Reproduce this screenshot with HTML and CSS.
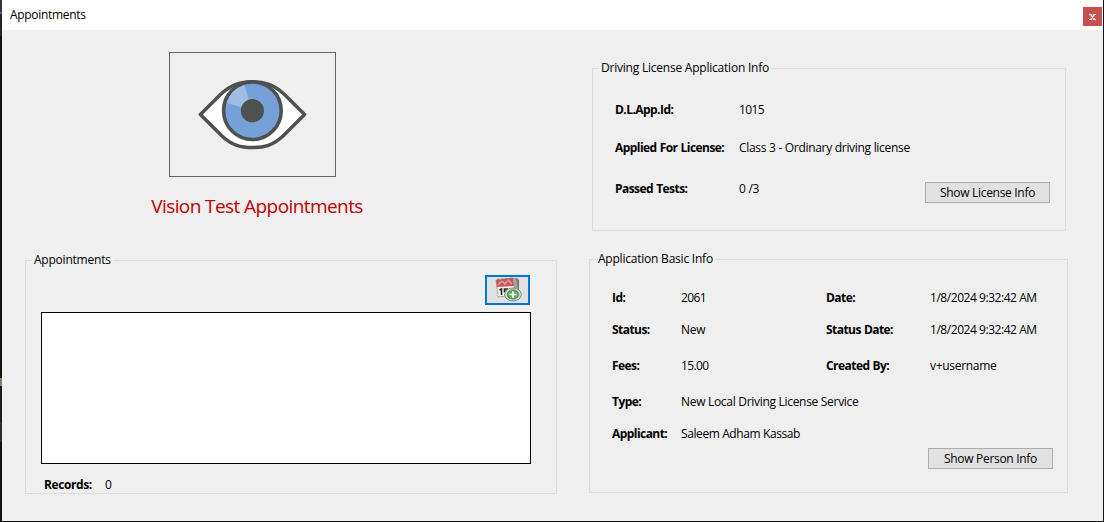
FILE: index.html
```html
<!DOCTYPE html>
<html lang="en">
<head>
<meta charset="utf-8">
<title>Appointments</title>
<link rel="stylesheet" href="styles.css">
</head>
<body>
<div class="window">
  <header class="titlebar">
    <span class="caption">Appointments</span>
    <button class="close" aria-label="Close"><svg width="7" height="6" viewBox="0 0 7 6"><path d="M0 .5h2.8M4.2 .5H7M0 5.5h2.8M4.2 5.5H7M1.6 .7l3.8 4.6M5.4 .7L1.6 5.3" stroke="#fff" stroke-width="1.2" fill="none"/></svg></button>
  </header>
  <main class="content">
    <section class="left">
      <div class="picture">
        <svg width="165" height="123" viewBox="0 0 165 123">
          <path d="M30.4 61.5L51 41C62 31 71 28.7 82.5 28.7S103 31 114 41L134.600 61.500L113 83C103 92.500 94 94.600 82.500 94.600S62 92.500 52 83Z" fill="#fff" stroke="#4d5251" stroke-width="3.500" stroke-linejoin="round"/>
          <circle cx="82.400" cy="57.700" r="28.800" fill="#76a1d8" stroke="#4d5251" stroke-width="3.600"/>
          <path d="M82.400 57.700L74.300 32A27 27 0 0 0 56.700 49.800Z" fill="#9fbde3"/>
          <circle cx="82.400" cy="57.700" r="11.600" fill="#4d5251"/>
        </svg>
      </div>
      <h1 class="heading">Vision Test Appointments</h1>
      <fieldset class="group appointments">
        <legend>Appointments</legend>
        <button class="add" aria-label="Add appointment">
          <svg width="30" height="26" viewBox="0 0 30 26">
            <path d="M10 2l14-1 2 2v13l-12 5z" fill="#777" />
            <path d="M18 2l5-1 2 12-6 1z" fill="#a9a3a2"/>
            <path d="M3 3L20 1l2 17L5 20z" fill="#f5f3f2" stroke="#948a89" stroke-width=".7"/>
            <path d="M3 3L20 1l1 8L4 10z" fill="#cf5557"/>
            <path d="M5 8l4-4 3 3 3-4 4 4" fill="none" stroke="#eaa09c" stroke-width="1.300"/>
            <path d="M5 1.500v3M9 1.200v3M14 1v3M18 .7v3" stroke="#8a7373" stroke-width="1.200"/>
            <path d="M6.500 13l2-1v6M15 12h-3.500v2.500c4-.8 4 3.500 0 3" fill="none" stroke="#292929" stroke-width="1.600"/>
            <ellipse cx="20" cy="17.500" rx="8.300" ry="6.500" fill="#dcdfda" stroke="#858985"/>
            <ellipse cx="20" cy="17.500" rx="5.900" ry="4.700" fill="#5cad5c" stroke="#398343" stroke-width=".7"/>
            <path d="M16.500 17.500h7M20 14.300v6.400" stroke="#fff" stroke-width="1.700"/>
          </svg>
        </button>
        <div class="list"></div>
        <div class="records"><b>Records:</b><span>0</span></div>
      </fieldset>
    </section>
    <section class="right">
      <fieldset class="group license">
        <legend>Driving License Application Info</legend>
        <div class="license-grid">
          <b>D.L.App.Id:</b><span class="num wide">1015</span>
          <b>Applied For License:</b><span class="wide">Class 3 - Ordinary driving license</span>
          <b>Passed Tests:</b><span>0 /3</span>
          <button class="button show-license">Show License Info</button>
        </div>
      </fieldset>
      <fieldset class="group basic">
        <legend>Application Basic Info</legend>
        <div class="basic-grid">
          <b>Id:</b><span class="num">2061</span><b>Date:</b><span class="date">1/8/2024 9:32:42 AM</span>
          <b>Status:</b><span>New</span><b>Status Date:</b><span class="date">1/8/2024 9:32:42 AM</span>
          <b>Fees:</b><span class="num">15.00</span><b>Created By:</b><span>v+username</span>
          <b>Type:</b><span class="wide">New Local Driving License Service</span>
          <b>Applicant:</b><span class="wide name">Saleem Adham Kassab</span>
        </div>
        <button class="button show-person">Show Person Info</button>
      </fieldset>
    </section>
  </main>
</div>
</body>
</html>
```
FILE: styles.css
```css
* { box-sizing: border-box; }
body {
  margin: 0;
  width: 1104px;
  height: 522px;
  overflow: hidden;
  padding: 0 1px 1px 2px;
  background: linear-gradient(#333 0 12px, #5b4bc0 12px 14px, #252528 14px 36px, #111 36px 378px, #8a7a60 378px 386px, #1c1c1c 386px 422px, #2c2c2c 422px 442px, #111 442px) 0 0 / 2px 100% no-repeat #151515;
  font: 12px/17px "Open Sans", "Noto Sans", sans-serif;
  letter-spacing: -0.3px;
  color: #000;
}
b { font-weight: 700; letter-spacing: -0.55px; word-spacing: 0.5px; }
button { font: inherit; letter-spacing: inherit; color: inherit; padding: 0; }
.window { height: 521px; background: #efefef; }
.titlebar {
  display: flex;
  justify-content: space-between;
  height: 30px;
  padding: 7px 1px 0 8px;
  background: #fff;
}
.caption { margin-top: -1px; }
.close {
  display: flex;
  align-items: center;
  justify-content: center;
  width: 19px;
  height: 19px;
  border: 0;
  background: #c75050;
}
.content { display: flex; align-items: flex-start; }
.left { width: 555px; margin-left: 23px; padding-top: 22px; }
.picture {
  width: 167px;
  height: 125px;
  margin-left: 144px;
  border: 1px solid #646464;
}
.picture svg { display: block; }
.heading {
  width: 464px;
  margin: 16px 0 33px;
  text-align: center;
  font: 400 19px/26px "Open Sans", "Noto Sans", sans-serif;
  letter-spacing: -0.58px;
  color: #c00000;
}
.group {
  min-width: 0;
  margin: 0;
  padding: 0;
  border: 1px solid #dcdcdc;
}
.group legend { margin-left: 6px; padding: 0 2px; letter-spacing: -0.22px; }
.appointments { width: 532px; height: 242px; }
.appointments legend { position: relative; top: -1px; }
.right legend { height: 17px; line-height: 15px; }
.add {
  display: flex;
  align-items: center;
  justify-content: center;
  width: 45px;
  height: 30px;
  margin: 6px 0 7px 459px;
  border: 2px solid #0078d7;
  background: #e1e1e1;
}
.list {
  width: 490px;
  height: 152px;
  margin-left: 15px;
  border: 1px solid #000;
  background: #fff;
}
.records { display: flex; margin: 12px 0 0 18px; }
.records b { width: 61px; letter-spacing: -0.4px; }
.right { padding-top: 30px; }
.license { width: 474px; height: 171px; margin-left: 12px; }
.license-grid {
  display: grid;
  grid-template: 34px 42px 40px / 124px 170px 1fr;
  align-items: center;
  padding: 15px 15px 0 22px;
}
.wide { grid-column: 2 / -1; }
.num { letter-spacing: -0.6px; }
.date { letter-spacing: -0.45px; }
.name { letter-spacing: -0.4px; }
.button {
  width: 125px;
  height: 21px;
  border: 1px solid #adadad;
  background: #e1e1e1;
  line-height: 17px;
}
.show-license { justify-self: end; margin-top: 9px; }
.basic { width: 479px; height: 242px; margin: 20px 0 0 9px; }
.basic-grid {
  display: grid;
  grid-template: 32px 32px 40px 32px 32px / 69px 145px 104px 1fr;
  align-items: center;
  padding: 13px 0 0 22px;
}
.show-person { display: block; margin: -1px 14px 0 auto; }
```
